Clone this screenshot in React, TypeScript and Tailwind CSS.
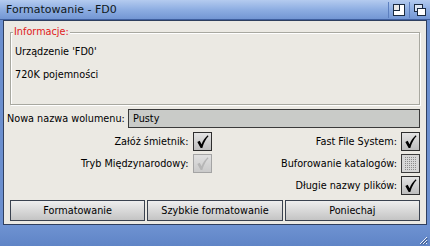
import React from 'react';

const font = "font-['DejaVu_Sans',sans-serif]";

function Check({ color = '#000' }: { color?: string }) {
  return (
    <svg viewBox="0 0 16 16" className="w-[15px] h-[15px]">
      <path d="M2.5 8.5 L5 7.2 L7 10.8 C8.6 6.8 10.6 3.8 13.6 1.2 L14.4 2.4 C11.8 5 9.6 9 7.8 14.8 L6 14.8 Z" fill={color} />
    </svg>
  );
}

function CheckBox({ state }: { state: 'on' | 'disabled' | 'dotted' }) {
  if (state === 'dotted') {
    return (
      <div className="w-[19px] h-[19px] border border-[#3c3c3c] p-[2px] bg-[#d6d6d6] shrink-0">
        <div className="w-full h-full bg-[#d8d8d8] bg-[repeating-conic-gradient(#8c8c8c_0_25%,#d8d8d8_0_100%)] bg-[length:2px_2px]" />
      </div>
    );
  }
  const disabled = state === 'disabled';
  return (
    <div
      className={`w-[19px] h-[19px] border flex items-center justify-center shrink-0 ${
        disabled ? 'border-[#a4a4a4] bg-gradient-to-b from-[#e0e0e0] to-[#cacaca]' : 'border-[#2e2e2e] bg-gradient-to-b from-[#e4e4e4] to-[#bdbdbd]'
      }`}
    >
      <Check color={disabled ? '#b6b6b6' : '#000'} />
    </div>
  );
}

function Row({ label, state }: { label: string; state: 'on' | 'disabled' | 'dotted' }) {
  return (
    <div className="flex items-center justify-end gap-[4px] h-[19px]">
      <span className="text-[9.7px] text-black leading-none whitespace-nowrap">{label}</span>
      <CheckBox state={state} />
    </div>
  );
}

function Button({ children }: { children: React.ReactNode }) {
  return (
    <button className="flex-1 h-[21px] border border-[#3a4250] bg-gradient-to-b from-[#eeeeee] to-[#c4c4c4] text-[9.7px] text-black leading-none">
      {children}
    </button>
  );
}

export default function App() {
  return (
    <div className={`w-[430px] h-[246px] flex flex-col bg-[#6b8fcf] ${font}`}>
      {/* title bar */}
      <div className="h-[20px] flex items-center bg-gradient-to-b from-[#b4cbef] via-[#8eaee2] to-[#7396d4] border-b border-[#3f5f9f] pl-[6px] pr-[3px]">
        <span className="flex-1 text-[11px] text-[#101820] leading-none">Formatowanie - FD0</span>
        <div className="flex items-center h-full">
          <div className="w-px h-[16px] bg-[#5c7fbf] mr-[4px]" />
          <svg viewBox="0 0 12 12" className="w-[12px] h-[12px] mr-[4px]">
            <rect x="0.5" y="0.5" width="11" height="11" fill="#fff" stroke="#1a2a40" />
            <rect x="0.5" y="0.5" width="6" height="6" fill="#e6e6e6" stroke="#1a2a40" />
          </svg>
          <div className="w-px h-[16px] bg-[#5c7fbf] mr-[4px]" />
          <svg viewBox="0 0 12 12" className="w-[12px] h-[12px] mr-[1px]">
            <rect x="0.5" y="0.5" width="8" height="7" fill="#dde6f4" stroke="#1a2a40" />
            <rect x="3.5" y="4.5" width="8" height="7" fill="#fff" stroke="#1a2a40" />
          </svg>
        </div>
      </div>

      {/* body */}
      <div className="flex-1 flex px-[3px]">
        <div className="flex-1 flex flex-col bg-[#ebe9e3] border border-[#2f3f5f] px-[3px] pt-[11px] pb-[3px]">
          {/* group */}
          <div className="relative mx-[3px] h-[73px] border border-[#a8a8a0] shadow-[inset_1px_1px_0_#fff,1px_1px_0_#fff] px-[4px] pt-[14px]">
            <span className="absolute left-[2px] top-[-6px] bg-[#ebe9e3] px-[1px] text-[9.7px] text-[#e02020] leading-none">Informacje:</span>
            <div className="text-[9.7px] text-black leading-none">Urządzenie 'FD0'</div>
            <div className="text-[9.7px] text-black leading-none mt-[13px]">720K pojemności</div>
          </div>

          {/* name */}
          <div className="flex items-center mt-[4px] h-[19px]">
            <span className="text-[9.7px] text-black leading-none w-[121px] whitespace-nowrap">Nowa nazwa wolumenu:</span>
            <div className="flex-1 h-[19px] border border-[#3a3a3a] bg-[#c9cbc8] flex items-center px-[4px] mr-[3px]">
              <span className="text-[9.7px] text-black leading-none">Pusty</span>
            </div>
          </div>

          {/* options */}
          <div className="grid grid-cols-2 mt-[4px] mr-[3px]">
            <div className="flex flex-col gap-[3px] pr-[2px]">
              <Row label="Załóż śmietnik:" state="on" />
              <Row label="Tryb Międzynarodowy:" state="disabled" />
            </div>
            <div className="flex flex-col gap-[3px]">
              <Row label="Fast File System:" state="on" />
              <Row label="Buforowanie katalogów:" state="dotted" />
              <Row label="Długie nazwy plików:" state="on" />
            </div>
          </div>

          {/* buttons */}
          <div className="flex gap-[2px] mt-[5px] mx-[3px]">
            <Button>Formatowanie</Button>
            <Button>Szybkie formatowanie</Button>
            <Button>Poniechaj</Button>
          </div>
        </div>
      </div>

      {/* bottom */}
      <div className="h-[21px] flex justify-end items-end bg-gradient-to-b from-[#6f93d2] to-[#5f84c6] pr-[2px] pb-[1px]">
        <svg viewBox="0 0 10 10" className="w-[10px] h-[10px]">
          <path d="M9 2 L2 9 M9 5 L5 9 M9 8 L8 9" stroke="#eef3fb" strokeWidth="1" />
          <path d="M9.5 3 L3 9.5 M9.5 6 L6 9.5" stroke="#2a3f66" strokeWidth="0.8" />
        </svg>
      </div>
    </div>
  );
}
